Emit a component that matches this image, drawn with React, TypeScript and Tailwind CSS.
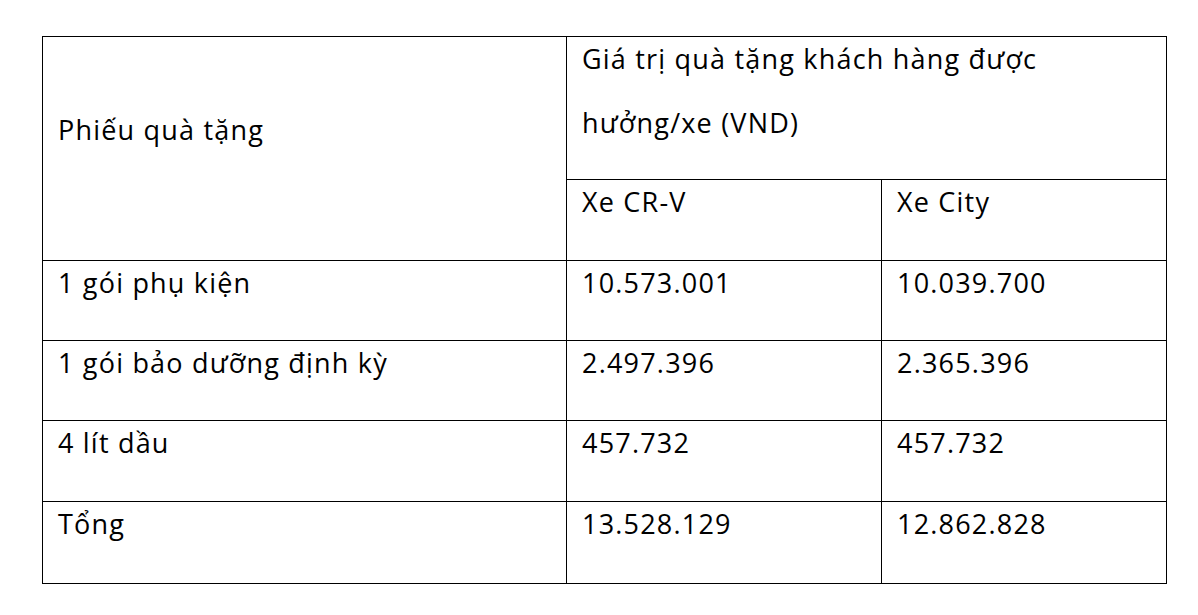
const rows = [
  { label: '1 gói phụ kiện', crv: '10.573.001', city: '10.039.700', h: 'h-[80px]' },
  { label: '1 gói bảo dưỡng định kỳ', crv: '2.497.396', city: '2.365.396', h: 'h-[80px]' },
  { label: '4 lít dầu', crv: '457.732', city: '457.732', h: 'h-[81px]' },
  { label: 'Tổng', crv: '13.528.129', city: '12.862.828', h: 'h-[82px]' },
]

const cell = 'border border-black align-top pl-[15px] pr-2 pt-[5px] leading-[34px]'

export default function App() {
  return (
    <div className="min-h-[615px] w-[1198px] bg-white pl-[42px] pt-[36px] text-black font-['Open_Sans','Noto_Sans',sans-serif] text-[27px] tracking-[1.2px]">
      <table className="w-[1124px] table-fixed border-collapse">
        <colgroup>
          <col className="w-[524px]" />
          <col className="w-[315px]" />
          <col className="w-[285px]" />
        </colgroup>
        <tbody>
          <tr className="h-[143px]">
            <td rowSpan={2} className={`${cell} pt-[76px]`}>
              Phiếu quà tặng
            </td>
            <td colSpan={2} className={`${cell} pt-[4px]`}>
              <div>Giá trị quà tặng khách hàng được</div>
              <div className="mt-[30px]">hưởng/xe (VND)</div>
            </td>
          </tr>
          <tr className="h-[81px]">
            <td className={cell}>Xe CR-V</td>
            <td className={cell}>Xe City</td>
          </tr>
          {rows.map((r) => (
            <tr key={r.label} className={r.h}>
              <td className={cell}>{r.label}</td>
              <td className={cell}>{r.crv}</td>
              <td className={cell}>{r.city}</td>
            </tr>
          ))}
        </tbody>
      </table>
    </div>
  )
}
